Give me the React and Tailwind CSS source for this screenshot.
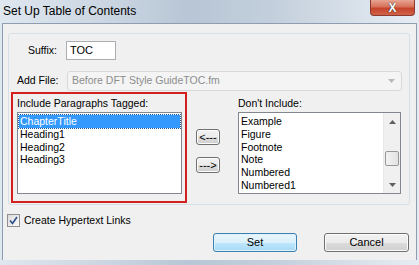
import React from 'react';

const WinButton = ({ children, primary, className = '' }) => (
  <div
    className={`flex items-center justify-center rounded-[3px] border text-[11px] text-black ${
      primary
        ? 'border-[#3c7fb1] bg-[linear-gradient(180deg,#eaf6fd_0%,#d9f0fc_50%,#bee6fd_51%,#a7d9f5_100%)] shadow-[inset_0_0_0_1px_#dff2fc]'
        : 'border-[#707070] bg-[linear-gradient(180deg,#f2f2f2_0%,#ebebeb_50%,#dddddd_51%,#cfcfcf_100%)] shadow-[inset_0_0_0_1px_#fcfcfc]'
    } ${className}`}
  >
    {children}
  </div>
);

const ListBox = ({ items, selected, scroll, className = '' }) => (
  <div className={`flex border border-[#828790] bg-white ${className}`}>
    <div className="flex-1 pt-[2px] pl-[1px] pr-[1px]">
      {items.map((it) => (
        <div
          key={it}
          className={`h-[12.8px] leading-[12.8px] pl-[1px] text-[10.5px] whitespace-nowrap ${
            it === selected ? 'bg-[#3399ff] text-white outline outline-1 outline-dotted outline-[#1a5a9a]' : 'text-black'
          }`}
        >
          {it}
        </div>
      ))}
    </div>
    {scroll && (
      <div className="flex w-[17px] flex-col items-center bg-[#f0f0f0] border-l border-[#e8e8e8]">
        <div className="flex h-[17px] w-full items-center justify-center">
          <svg width="7" height="4" viewBox="0 0 7 4">
            <path d="M0 4 L3.5 0 L7 4 Z" fill="#606060" />
          </svg>
        </div>
        <div className="flex-1 w-full flex flex-col">
          <div className="h-[21px]" />
          <div className="mx-[1px] h-[15px] rounded-[2px] border border-[#979797] bg-[linear-gradient(90deg,#f3f3f3,#e2e2e2)]" />
        </div>
        <div className="flex h-[17px] w-full items-center justify-center">
          <svg width="7" height="4" viewBox="0 0 7 4">
            <path d="M0 0 L3.5 4 L7 0 Z" fill="#606060" />
          </svg>
        </div>
      </div>
    )}
  </div>
);

export default function App() {
  return (
    <div className="font-[family-name:Liberation_Sans,Arial,sans-serif] h-[265px] w-[419px] overflow-hidden bg-[linear-gradient(90deg,#dfe7ef_0%,#cbd6e2_25%,#b8c6d5_45%,#c3cfdc_65%,#d8e1ea_85%,#e6ecf2_100%)]">
      {/* title bar */}
      <div className="flex h-[23px] items-start justify-between">
        <div className="pl-[3px] pt-[4px] text-[12px] leading-[14px] text-black">
          Set Up Table of Contents
        </div>
        <div className="mr-[4px] flex h-[16px] w-[45px] items-center justify-center rounded-b-[4px] border border-t-0 border-[#8a3a2e] bg-[linear-gradient(180deg,#e8a493_0%,#d7725a_45%,#c5432a_55%,#d1634a_100%)]">
          <span className="text-[12px] font-bold leading-none text-white [text-shadow:0_0_1px_#333,0_0_1px_#333]">
            X
          </span>
        </div>
      </div>

      {/* client area */}
      <div className="mx-[2px] h-[237px] border-l border-t border-r border-[#8e9db0] bg-[#f0f0f0] pl-[5px] pt-[9px] text-[10.5px]">
        <div className="h-[172px] w-[402px] rounded-[3px] border border-[#d5dfe5]">
          {/* suffix */}
          <div className="mt-[7px] flex items-center">
            <div className="w-[48px] text-right text-black">Suffix:</div>
            <div className="ml-[9px] flex h-[19px] w-[50px] items-center border border-[#abadb3] bg-white pl-[3px] text-[11px] text-black">
              TOC
            </div>
          </div>

          {/* add file */}
          <div className="mt-[11px] flex items-center">
            <div className="ml-[8px] w-[50px] text-black">Add File:</div>
            <div className="flex h-[20px] w-[335px] items-center justify-between rounded-[3px] border border-[#d9d9d9] bg-[#f4f4f4] pl-[4px] pr-[6px] text-[#8d8d8d]">
              <span>Before DFT Style GuideTOC.fm</span>
              <svg width="7" height="4" viewBox="0 0 7 4">
                <path d="M0 0 L3.5 4 L7 0 Z" fill="#b8b8b8" />
              </svg>
            </div>
          </div>

          {/* lists */}
          <div className="mt-[1px] flex items-start">
            <div className="ml-[2px] h-[111px] w-[176px] border-2 border-[#d21f1f] pl-[4px] pt-[3px]">
              <div className="h-[15px] leading-[13px] text-black">Include Paragraphs Tagged:</div>
              <ListBox
                className="h-[82px] w-[165px]"
                items={['ChapterTitle', 'Heading1', 'Heading2', 'Heading3']}
                selected="ChapterTitle"
              />
            </div>

            <div className="ml-[9px] mt-[37px] flex flex-col gap-[12px]">
              <WinButton className="h-[16px] w-[24px]">&lt;---</WinButton>
              <WinButton className="h-[16px] w-[24px]">---&gt;</WinButton>
            </div>

            <div className="ml-[18px] pt-[5px]">
              <div className="h-[15px] leading-[13px] text-black">Don&apos;t Include:</div>
              <ListBox
                className="h-[82px] w-[163px]"
                items={['Example', 'Figure', 'Footnote', 'Note', 'Numbered', 'Numbered1']}
                scroll
              />
            </div>
          </div>
        </div>

        {/* checkbox */}
        <div className="mt-[8px] flex items-center">
          <div className="-ml-[1px] flex h-[13px] w-[13px] items-center justify-center border border-[#8f8f8f] bg-[linear-gradient(135deg,#dcdcdc,#fafafa)]">
            <svg width="9" height="9" viewBox="0 0 9 9">
              <path d="M1 4.5 L3.5 7.5 L8 1" stroke="#2a4f8a" strokeWidth="1.6" fill="none" />
            </svg>
          </div>
          <div className="ml-[4px] text-black">Create Hypertext Links</div>
        </div>

        {/* buttons */}
        <div className="mt-[4px] flex">
          <WinButton primary className="ml-[205px] h-[19px] w-[84px]">Set</WinButton>
          <WinButton className="ml-[27px] h-[19px] w-[85px]">Cancel</WinButton>
        </div>
      </div>
    </div>
  );
}
